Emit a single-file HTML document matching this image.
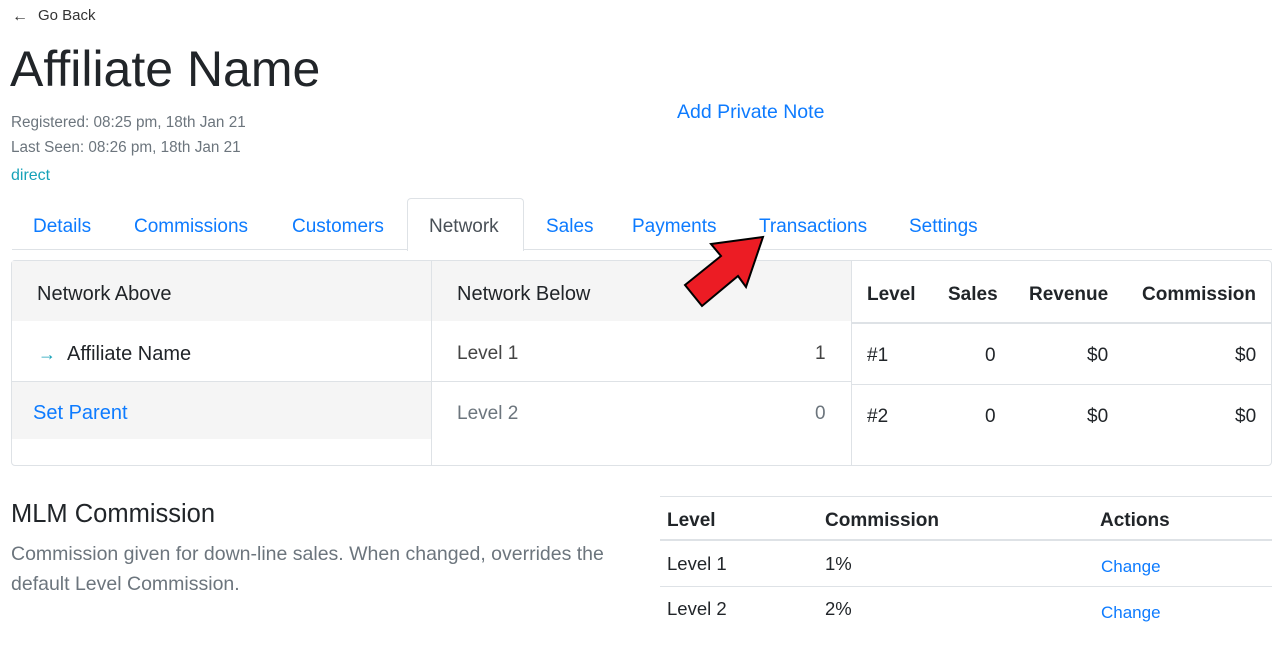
<!DOCTYPE html>
<html><head><meta charset="utf-8"><style>
*{margin:0;padding:0;box-sizing:border-box}
body{width:1282px;height:653px;background:#fff;font-family:"Liberation Sans",sans-serif;color:#212529;position:relative;overflow:hidden}
.a{position:absolute;white-space:nowrap;line-height:1}
.blue{color:#0d7bff}
.g{color:#6c757d}
.tab{position:absolute;top:217px;font-size:19px;color:#0d7bff;line-height:1}
.hl{position:absolute;height:1px;background:#dee2e6}
.vl{position:absolute;width:1px;background:#dee2e6}
.b{font-weight:bold;font-size:19px}
</style></head><body>
<div class="a" style="left:12px;top:9px;font-size:16px;color:#333">&larr;</div>
<div class="a" style="left:38px;top:8px;font-size:15px;color:#333">Go Back</div>
<div class="a" style="left:10px;top:44px;font-size:50px;color:#212529">Affiliate Name</div>
<div class="a g" style="left:11px;top:115px;font-size:15.3px">Registered: 08:25 pm, 18th Jan 21</div>
<div class="a g" style="left:11px;top:140px;font-size:15.3px">Last Seen: 08:26 pm, 18th Jan 21</div>
<div class="a" style="left:11px;top:168px;font-size:16px;color:#17a2b8">direct</div>
<div class="a blue" style="left:677px;top:103px;font-size:19.5px">Add Private Note</div>

<div class="hl" style="left:12px;top:249px;width:1260px"></div>
<div style="position:absolute;left:407px;top:198px;width:117px;height:53px;border:1px solid #dee2e6;border-bottom:none;border-radius:4px 4px 0 0;background:#fff"></div>
<div class="tab" style="left:33px">Details</div>
<div class="tab" style="left:134px">Commissions</div>
<div class="tab" style="left:292px">Customers</div>
<div class="tab" style="left:429px;color:#495057">Network</div>
<div class="tab" style="left:546px">Sales</div>
<div class="tab" style="left:632px">Payments</div>
<div class="tab" style="left:759px">Transactions</div>
<div class="tab" style="left:909px">Settings</div>

<div style="position:absolute;left:11px;top:260px;width:1261px;height:206px;border:1px solid #dee2e6;border-radius:4px"></div>
<div style="position:absolute;left:12px;top:261px;width:840px;height:60px;background:#f5f5f5"></div>
<div style="position:absolute;left:12px;top:382px;width:419px;height:57px;background:#f5f5f5"></div>
<div class="vl" style="left:431px;top:261px;height:204px"></div>
<div class="vl" style="left:851px;top:261px;height:204px"></div>
<div class="hl" style="left:12px;top:381px;width:839px"></div>
<div class="hl" style="left:852px;top:322px;width:419px;height:2px"></div>
<div class="hl" style="left:852px;top:384px;width:419px"></div>

<div class="a" style="left:37px;top:284px;font-size:20px">Network Above</div>
<div class="a" style="left:457px;top:284px;font-size:20px">Network Below</div>
<div class="a" style="left:38px;top:344px;font-size:20px"><span style="color:#17a2b8;font-size:18px">&rarr;</span></div>
<div class="a" style="left:67px;top:344px;font-size:20px">Affiliate Name</div>
<div class="a blue" style="left:33px;top:403px;font-size:20px">Set Parent</div>
<div class="a" style="left:457px;top:344px;font-size:19px;color:#444">Level 1</div>
<div class="a" style="left:815px;top:344px;font-size:19px;color:#444">1</div>
<div class="a g" style="left:457px;top:404px;font-size:19px">Level 2</div>
<div class="a g" style="left:815px;top:404px;font-size:19px">0</div>

<div class="a b" style="left:867px;top:285px">Level</div>
<div class="a b" style="left:948px;top:285px">Sales</div>
<div class="a b" style="left:1029px;top:285px">Revenue</div>
<div class="a b" style="left:1142px;top:285px">Commission</div>
<div class="a" style="left:867px;top:346px;font-size:19px">#1</div>
<div class="a" style="left:985px;top:346px;font-size:19px">0</div>
<div class="a" style="left:1087px;top:346px;font-size:19px">$0</div>
<div class="a" style="left:1235px;top:346px;font-size:19px">$0</div>
<div class="a" style="left:867px;top:407px;font-size:19px">#2</div>
<div class="a" style="left:985px;top:407px;font-size:19px">0</div>
<div class="a" style="left:1087px;top:407px;font-size:19px">$0</div>
<div class="a" style="left:1235px;top:407px;font-size:19px">$0</div>

<div class="a" style="left:11px;top:502px;font-size:25.5px">MLM Commission</div>
<div class="a g" style="left:11px;top:539px;font-size:19.5px;line-height:30px">Commission given for down-line sales. When changed, overrides the<br>default Level Commission.</div>

<div class="hl" style="left:660px;top:496px;width:612px"></div>
<div class="hl" style="left:660px;top:539px;width:612px;height:2px"></div>
<div class="hl" style="left:660px;top:586px;width:612px"></div>
<div class="a b" style="left:667px;top:511px">Level</div>
<div class="a b" style="left:825px;top:511px">Commission</div>
<div class="a b" style="left:1100px;top:511px">Actions</div>
<div class="a" style="left:667px;top:555px;font-size:18.5px">Level 1</div>
<div class="a" style="left:825px;top:555px;font-size:18.5px">1%</div>
<div class="a blue" style="left:1101px;top:558px;font-size:17px">Change</div>
<div class="a" style="left:667px;top:600px;font-size:18.5px">Level 2</div>
<div class="a" style="left:825px;top:600px;font-size:18.5px">2%</div>
<div class="a blue" style="left:1101px;top:604px;font-size:17px">Change</div>

<svg style="position:absolute;left:0;top:0" width="1282" height="653"><polygon points="763,237 711,244 721,256 685,285 702,306 738,276 746,287" fill="#ec1c24" stroke="#000" stroke-width="2" stroke-linejoin="miter"/></svg>
</body></html>
